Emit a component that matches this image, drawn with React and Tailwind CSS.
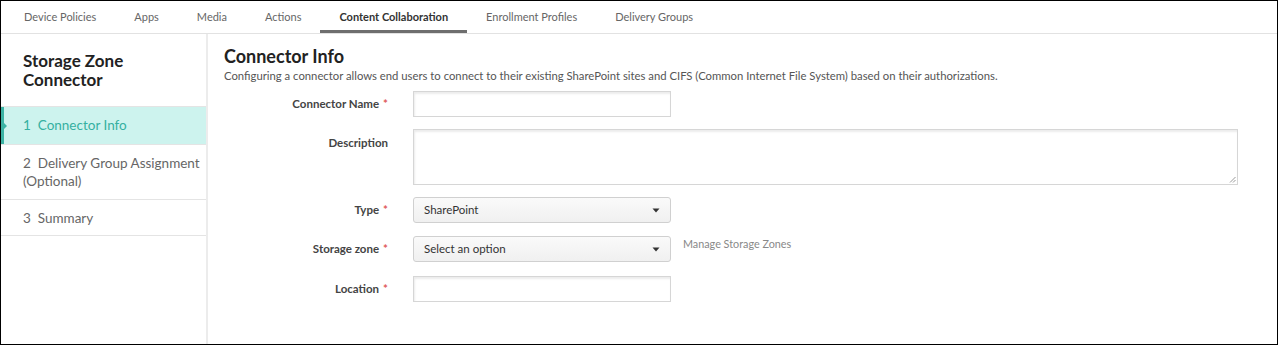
const font = { fontFamily: "Lato, 'Open Sans', sans-serif" };

const tabs = [
  "Device Policies",
  "Apps",
  "Media",
  "Actions",
  "Content Collaboration",
  "Enrollment Profiles",
  "Delivery Groups",
];

function Caret() {
  return (
    <svg width="8" height="5" viewBox="0 0 8 5" className="shrink-0">
      <path d="M0.5 0.5 H7.5 L4 4.5 Z" fill="#333" />
    </svg>
  );
}

function Req() {
  return <span className="text-[#e05a5a] ml-1">*</span>;
}

function Label({ children, req, top }) {
  return (
    <div
      className={`text-right text-[11.5px] font-bold text-[#444] ${top ? "pt-[5px]" : "flex items-center justify-end"}`}
    >
      <span>
        {children}
        {req && <Req />}
      </span>
    </div>
  );
}

function TextBox() {
  return (
    <div className="w-[258px] h-[26px] bg-white border border-[#d6d6d6] shadow-[inset_1px_2px_2px_rgba(0,0,0,0.08)]"></div>
  );
}

function Select({ value }) {
  return (
    <div className="w-[258px] h-[26px] rounded-[3px] border border-[#d0d0d0] bg-gradient-to-b from-[#fafafa] to-[#f0f0f0] flex items-center justify-between pl-[10px] pr-[10px] text-[11.5px] text-[#333]">
      <span>{value}</span>
      <Caret />
    </div>
  );
}

export default function App() {
  return (
    <div
      className="w-[1278px] h-[345px] border border-black bg-white flex flex-col overflow-hidden"
      style={font}
    >
      {/* Tabs */}
      <div className="h-[33px] shrink-0 border-b border-[#e2e2e2] flex items-stretch pl-[4px]">
        {tabs.map((t) => {
          const active = t === "Content Collaboration";
          return (
            <div
              key={t}
              className={`px-[19px] flex items-center text-[11px] ${
                active
                  ? "font-bold text-[#333] border-b-[3px] border-[#6e6e6e] pt-[3px]"
                  : "text-[#666]"
              }`}
            >
              {t}
            </div>
          );
        })}
      </div>

      <div className="flex flex-1 min-h-0">
        {/* Sidebar */}
        <div className="w-[207px] shrink-0 border-r-2 border-[#ececec]">
          <div className="pl-[22px] pt-[17px] pb-[17px] text-[17px] font-bold leading-[19px] text-[#222]">
            Storage Zone
            <br />
            Connector
          </div>
          <div className="border-t border-[#e4e4e4]">
            <div className="relative h-[37px] bg-[#cdf3ee] border-l-[3px] border-[#3bb3a4] flex items-center pl-[19px] text-[13.5px] text-[#35b0a1]">
              <span className="absolute -left-[1px] top-[15px] w-0 h-0 border-y-[4px] border-y-transparent border-l-[4px] border-l-[#3bb3a4]"></span>
              1&nbsp;&nbsp;Connector Info
            </div>
            <div className="border-t border-[#e4e4e4] py-[9px] pl-[22px] text-[13.5px] leading-[18px] text-[#666] whitespace-nowrap">
              2&nbsp;&nbsp;Delivery Group Assignment
              <br />
              (Optional)
            </div>
            <div className="border-t border-b border-[#e4e4e4] h-[37px] flex items-center pl-[22px] pt-[1px] text-[13.5px] text-[#666]">
              3&nbsp;&nbsp;Summary
            </div>
          </div>
        </div>

        {/* Main */}
        <div className="flex-1 pl-[16px] pt-[11px]">
          <div className="text-[18px] font-bold text-[#222] leading-[22px]">
            Connector Info
          </div>
          <div className="text-[11.3px] text-[#555] leading-[16px] mt-[1px]">
            Configuring a connector allows end users to connect to their existing
            SharePoint sites and CIFS (Common Internet File System) based on their
            authorizations.
          </div>

          <div className="grid grid-cols-[164px_auto] gap-x-[25px] mt-[7px]">
            <Label req>Connector Name</Label>
            <TextBox />

            <div className="h-[12px] col-span-2"></div>
            <Label top>Description</Label>
            <div className="relative w-[825px] h-[56px] bg-white border border-[#d6d6d6] shadow-[inset_1px_2px_2px_rgba(0,0,0,0.08)]">
              <svg
                width="7"
                height="7"
                viewBox="0 0 7 7"
                className="absolute right-[1px] bottom-[1px]"
              >
                <path d="M6.5 1 L1 6.5 M6.5 4 L4 6.5" stroke="#999" strokeWidth="1" />
              </svg>
            </div>

            <div className="h-[12px] col-span-2"></div>
            <Label req>Type</Label>
            <Select value="SharePoint" />

            <div className="h-[13px] col-span-2"></div>
            <Label req>Storage zone</Label>
            <div className="flex items-start gap-[12px]">
              <Select value="Select an option" />
              <span className="text-[10.8px] text-[#888]">
                Manage Storage Zones
              </span>
            </div>

            <div className="h-[14px] col-span-2"></div>
            <Label req>Location</Label>
            <TextBox />
          </div>
        </div>
      </div>
    </div>
  );
}
